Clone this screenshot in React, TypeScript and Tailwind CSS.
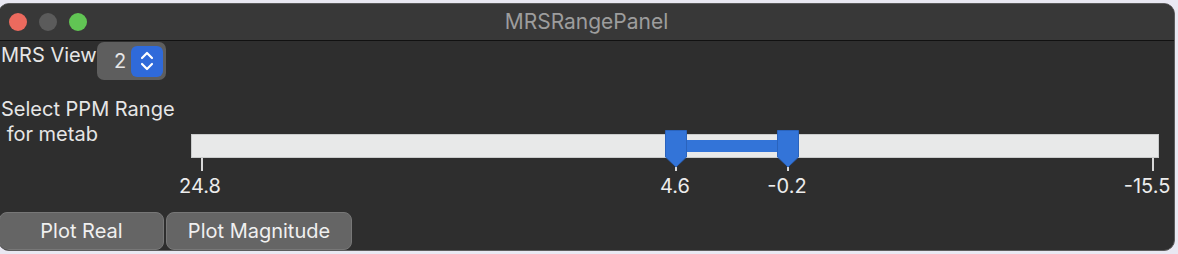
import React from "react";

const font = { fontFamily: "Inter, 'Noto Sans', sans-serif" };

function Thumb() {
  return (
    <svg width="22" height="38" viewBox="0 0 22 38" className="block">
      <path d="M0.5 0.5 H21.5 V27 L11 37 L0.5 27 Z" fill="#3374d8" stroke="#2a63bd" strokeWidth="1" />
    </svg>
  );
}

function RangeSlider() {
  const ticks = [
    { label: "24.8", x: 203, lx: 201 },
    { label: "4.6", x: 677, lx: 676 },
    { label: "-0.2", x: 789, lx: 788 },
    { label: "-15.5", x: 1154, lx: 1148 },
  ];
  return (
    <div className="relative h-[132px] flex-1">
      <div className="absolute left-[190px] top-[54px] h-[24px] w-[968px] border border-[#c9cbcb] bg-[#e8e9e9]" />
      {ticks.map((t) => (
        <React.Fragment key={t.label}>
          <div
            className="absolute top-[78px] h-[13px] w-[2px] bg-[#d8d8d8]"
            style={{ left: t.x - 3 }}
          />
          <div
            className="absolute top-[96px] -translate-x-1/2 text-[20px] leading-none text-[#ececec]"
            style={{ left: t.lx - 2 }}
          >
            {t.label}
          </div>
        </React.Fragment>
      ))}
      <div className="absolute left-[684px] top-[60px] h-[12px] w-[94px] bg-[#3374d8]" />
      <div className="absolute left-[664px] top-[50px]">
        <Thumb />
      </div>
      <div className="absolute left-[776px] top-[50px]">
        <Thumb />
      </div>
    </div>
  );
}

export default function App() {
  return (
    <div className="h-[254px] w-[1178px] overflow-hidden bg-[#e9e8f2] pt-[3px] pr-[3px] pb-[3px]" style={font}>
      <div className="-ml-[2px] flex h-full flex-col overflow-hidden rounded-[11px] border border-[#5c5c5c] bg-[#2e2e2e]">
        <div className="relative flex h-[37px] shrink-0 items-center border-b border-[#111] bg-[#383838]">
          <div className="flex items-center gap-[12px] pl-[10px]">
            <span className="h-[18px] w-[18px] rounded-full bg-[#ec6a5e]" />
            <span className="h-[18px] w-[18px] rounded-full bg-[#5b5b5b]" />
            <span className="h-[18px] w-[18px] rounded-full bg-[#61c554]" />
          </div>
          <div className="absolute inset-0 flex items-center justify-center text-[21px] text-[#9d9d9d]">
            MRSRangePanel
          </div>
        </div>

        <div className="flex flex-1 flex-col pl-[2px] text-[20px] text-[#e6e6e6]">
          <div className="flex items-start pt-[1px]">
            <span className="w-[96px] leading-[24px] pt-[1px]">MRS View</span>
            <div className="flex h-[38px] w-[69px] items-center rounded-[7px] bg-[#5e5e5e] pl-[17px] pr-[3px]">
              <span className="text-[20px]">2</span>
              <div className="ml-auto flex h-[31px] w-[32px] items-center justify-center rounded-[6px] bg-[#2f6ada]">
                <svg width="16" height="24" viewBox="0 0 16 24" fill="none" stroke="#fff" strokeWidth="2.2" strokeLinecap="round" strokeLinejoin="round">
                  <path d="M3 9 L8 4 L13 9" />
                  <path d="M3 15 L8 20 L13 15" />
                </svg>
              </div>
            </div>
          </div>

          <div className="flex">
            <div className="w-[0px] shrink-0 whitespace-nowrap pt-[17px] leading-[25px]">
              <div>Select PPM Range</div>
              <div>&nbsp;for metab</div>
            </div>
            <RangeSlider />
          </div>

          <div className="-ml-[2px] flex gap-[2px]">
            <button className="h-[38px] w-[165px] rounded-[8px] border border-[#777] bg-[#656565] text-[20px] text-[#f0f0f0]">
              Plot Real
            </button>
            <button className="h-[38px] w-[186px] rounded-[8px] border border-[#777] bg-[#656565] text-[20px] text-[#f0f0f0]">
              Plot Magnitude
            </button>
          </div>
        </div>
      </div>
    </div>
  );
}
